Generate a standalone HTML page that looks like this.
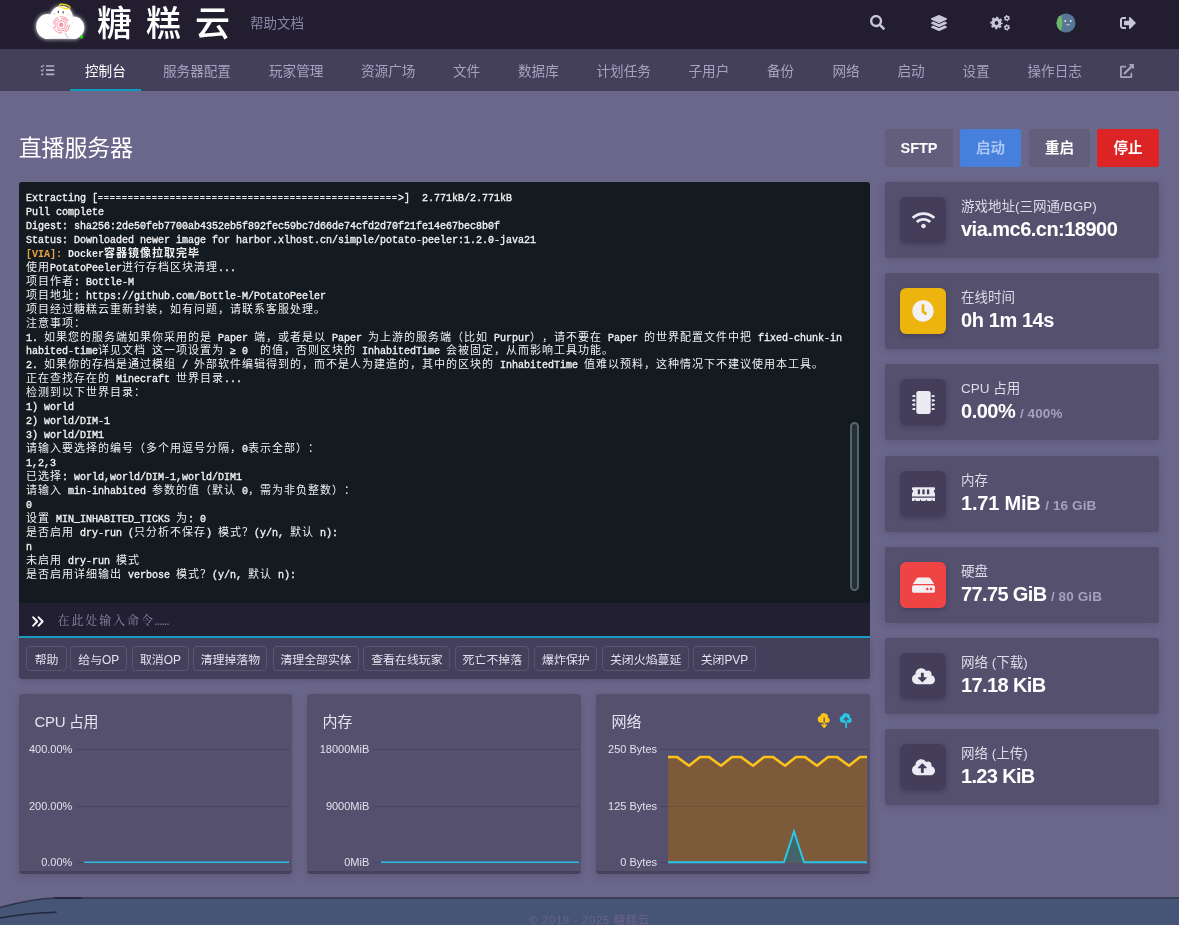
<!DOCTYPE html>
<html lang="zh-CN">
<head>
<meta charset="utf-8">
<title>直播服务器 - 糖糕云</title>
<style>
*{box-sizing:border-box;margin:0;padding:0}
html,body{width:1179px;height:925px;overflow:hidden}
body{will-change:transform;background:#6b678b;font-family:"Liberation Sans","Noto Sans CJK SC",sans-serif;color:#fff;position:relative}
svg{display:block}
.topbar{position:absolute;left:0;top:0;width:1179px;height:49px;background:#221e30}
.logo-text{position:absolute;left:97px;top:-3px;font-size:35px;line-height:48px;letter-spacing:14px;color:#fff;font-family:"Noto Sans CJK SC",sans-serif;font-weight:500;white-space:nowrap}
.help{position:absolute;left:250px;top:14.500px;font-size:13.5px;line-height:18px;color:#8985a6}
.ticon{position:absolute;top:13px}
.nav{position:absolute;left:0;top:49px;width:1179px;height:42px;background:#443f5b}
.nav a{position:absolute;top:0;height:42px;line-height:46px;font-size:13.6px;color:#a7a3bf;white-space:nowrap;text-decoration:none}
.nav a.act{color:#fff}
.nav .ul{position:absolute;left:70px;top:40px;width:71px;height:2px;background:#0f9abf}
h1{position:absolute;left:18.800px;top:129.800px;font-size:23px;line-height:36px;font-weight:400;color:#fff;letter-spacing:-0.2px}
.btn{position:absolute;top:129px;height:38px;border-radius:3px;font-size:14.5px;font-weight:700;line-height:39px;text-align:center;color:#fff;background:#645e7d}
.card{position:absolute;background:#55506e;border-radius:3px;box-shadow:0 2px 10px rgba(40,34,66,.22)}
.term{position:absolute;left:19px;top:182px;width:851px;height:421px;background:#131a20;border-radius:3px 3px 0 0;overflow:hidden}
.lines{position:absolute;left:7px;top:10px;-webkit-text-stroke:.35px #f0f0f0;font-family:"Liberation Mono","Noto Sans CJK SC",monospace;font-size:10px;line-height:13.960px;color:#f0f0f0}
.l{height:13.960px;white-space:pre}
.l i{-webkit-text-stroke:0;line-height:0;text-spacing-trim:space-all;font-kerning:none;font-style:normal;font-size:11px;letter-spacing:1px;font-family:"Noto Sans CJK SC",sans-serif}
.l u{text-decoration:none;font-size:8px;letter-spacing:1.200px;position:relative;top:-.6px;line-height:0}
.l.b{font-weight:700;-webkit-text-stroke:0}
.via{color:#e9a53f}
.sb{position:absolute;left:831px;top:240px;width:9px;height:169px;border:2.200px solid #55656e;border-radius:4.500px;background:#243038}
.cmd{position:absolute;left:19px;top:603px;width:851px;height:35px;background:#231f33;border-bottom:2px solid #17a2c9}
.cmd span{position:absolute;left:38.500px;top:8.300px;font-family:"Noto Serif CJK SC",serif;font-size:12px;line-height:18px;color:#8b87a6;letter-spacing:1.9px;white-space:nowrap}
.cmd span b{font-family:"Liberation Mono",monospace;font-weight:400;letter-spacing:0}
.quick{position:absolute;left:19px;top:638px;width:851px;height:41px;background:#443f5b;border-radius:0 0 3px 3px;box-shadow:0 2px 6px rgba(40,34,66,.25)}
.q{position:absolute;top:8px;height:25px;border:1px solid #5a5574;border-radius:4px;font-size:11.900px;line-height:26.500px;color:#e4e2ee;text-align:center;white-space:nowrap}
.stat{left:885px;width:274px;height:76px}
.ibox{position:absolute;left:15px;top:15px;width:46px;height:46px;border-radius:6px;background:#443e5b;box-shadow:0 2px 5px rgba(30,25,50,.3)}
.ibox svg{position:absolute}
.slab{position:absolute;left:76px;top:14.500px;font-size:13.5px;line-height:20px;color:#dddbe8;white-space:nowrap}
.sval{position:absolute;left:76px;top:34px;font-size:20px;line-height:26px;font-weight:700;color:#fff;white-space:nowrap}
.sval small{font-size:13.5px;color:#a5a1bd;font-weight:700;letter-spacing:.1px;margin-left:-.5px}
.chart{top:694px;width:274px;height:180px;border-bottom:3px solid #47425e;overflow:hidden}
.chart h3{position:absolute;left:15.500px;top:17px;font-size:15px;line-height:22px;font-weight:400;color:#e6e4ef}
.chart svg{position:absolute;left:0;top:0}
.foot{position:absolute;left:0;top:890px;width:1179px;height:35px}
.foot span{position:absolute;left:0;width:1179px;top:23px;text-align:center;font-size:11.500px;line-height:14px;color:#6a638a;letter-spacing:.6px}
</style>
</head>
<body>
<div class="topbar">
  <svg class="logo" style="position:absolute;left:30px;top:0" width="64" height="48" viewBox="30 0 64 48">
    <defs><filter id="gl" x="-20%" y="-20%" width="140%" height="140%"><feGaussianBlur stdDeviation="2"/></filter></defs>
    <g fill="#fff" filter="url(#gl)" opacity=".9"><circle cx="61.500" cy="17.300" r="11.300"/><ellipse cx="47.300" cy="26.400" rx="11.100" ry="12.400"/><ellipse cx="73.500" cy="27.600" rx="10.800" ry="11.200"/><rect x="45" y="20" width="32" height="18.800"/></g>
    <g fill="#fff"><circle cx="61.500" cy="17.300" r="11.300"/><ellipse cx="47.300" cy="26.400" rx="11.100" ry="12.400"/><ellipse cx="73.500" cy="27.600" rx="10.800" ry="11.200"/><rect x="45" y="20" width="32" height="18.800"/></g>
    <ellipse cx="64.700" cy="6.500" rx="5.400" ry="1.900" fill="none" stroke="#f4e20a" stroke-width="1.100" transform="rotate(14 64.700 6.500)"/>
    <path d="M58.300 10.800v2.300M63.200 11.200v2.300" stroke="#444" stroke-width="1.100"/>
    <ellipse cx="54.500" cy="14" rx="1.700" ry=".9" fill="#fde3e6"/><ellipse cx="68" cy="14.600" rx="1.700" ry=".9" fill="#fde3e6"/>
    <g fill="none" stroke="#f9a3b4">
      <circle cx="61.200" cy="24.800" r="8.100" stroke-width="1.100" stroke-dasharray="9 2.500 12 3 8 2 10 4.400"/>
      <circle cx="61.200" cy="24.800" r="6.200" stroke-width="1.100" stroke-dasharray="14 2 10 2.500 8 2.460"/>
      <circle cx="61.200" cy="24.800" r="4.200" stroke-width="1.200"/>
    </g>
    <circle cx="61.200" cy="24.800" r="2.200" fill="#f892a8"/>
    <path d="M65.300 33.300L67.800 37.600" stroke="#d9d9dc" stroke-width="1.300" stroke-linecap="round"/>
    <path d="M46.800 23L51.700 27M73.400 22.300L70 25.500" stroke="#e4e4e6" stroke-width=".7"/>
    <circle cx="81.600" cy="36.900" r="1.600" fill="#22e000"/>
  </svg>
  <div class="logo-text">糖糕云</div>
  <div class="help">帮助文档</div>
  <!-- search -->
  <svg class="ticon" style="left:870px;top:15px" width="15" height="15" viewBox="0 0 512 512"><path fill="#c9c6da" d="M505 442.700L405.300 343c-4.500-4.500-10.600-7-17-7H372c27.600-35.300 44-79.700 44-128C416 93.100 322.900 0 208 0S0 93.100 0 208s93.100 208 208 208c48.300 0 92.700-16.400 128-44v16.300c0 6.400 2.500 12.500 7 17l99.700 99.700c9.400 9.400 24.600 9.400 33.900 0l28.300-28.300c9.400-9.400 9.400-24.600.1-34zM208 336c-70.700 0-128-57.200-128-128 0-70.700 57.200-128 128-128 70.700 0 128 57.200 128 128 0 70.700-57.200 128-128 128z"/></svg>
  <!-- layers -->
  <svg class="ticon" style="left:930.500px;top:15px" width="16" height="16" viewBox="0 0 512 512"><path fill="#c9c6da" d="M12.410 148.020l232.940 105.670c6.800 3.090 14.490 3.090 21.290 0l232.940-105.670c16.550-7.510 16.550-32.520 0-40.030L266.650 2.310a25.607 25.607 0 0 0-21.290 0L12.410 107.980c-16.550 7.510-16.550 32.530 0 40.040zm487.180 88.280l-58.090-26.330-161.640 73.270c-7.560 3.430-15.590 5.170-23.860 5.170s-16.290-1.740-23.860-5.170L70.510 209.970l-58.100 26.330c-16.550 7.500-16.550 32.500 0 40l232.940 105.590c6.800 3.080 14.490 3.080 21.290 0L499.590 276.300c16.550-7.500 16.550-32.500 0-40zm0 127.800l-57.870-26.230-161.860 73.370c-7.560 3.430-15.590 5.170-23.860 5.170s-16.290-1.740-23.860-5.170L70.290 337.870 12.410 364.100c-16.550 7.500-16.550 32.500 0 40l232.940 105.590c6.800 3.080 14.490 3.080 21.290 0L499.590 404.100c16.550-7.500 16.550-32.500 0-40z"/></svg>
  <!-- cogs -->
  <svg class="ticon" style="left:990px;top:14px" width="21" height="18" viewBox="990 14 21 18">
    <g fill="none" stroke="#c9c6da">
      <circle cx="996.500" cy="23" r="3.400" stroke-width="3"/>
      <circle cx="996.500" cy="23" r="5.400" stroke-width="1.700" stroke-dasharray="2.300 1.940" stroke-dashoffset="1.100"/>
      <circle cx="1006.900" cy="18.200" r="1.700" stroke-width="1.400"/>
      <circle cx="1006.900" cy="18.200" r="2.600" stroke-width="1.100" stroke-dasharray="1.350 1.370"/>
      <circle cx="1006.900" cy="27.500" r="1.700" stroke-width="1.400"/>
      <circle cx="1006.900" cy="27.500" r="2.600" stroke-width="1.100" stroke-dasharray="1.350 1.370"/>
    </g>
  </svg>
  <!-- avatar -->
  <svg class="ticon" style="left:1056px;top:13px" width="20" height="20" viewBox="0 0 20 20">
    <defs><clipPath id="av"><circle cx="10" cy="10" r="9.500"/></clipPath></defs>
    <g clip-path="url(#av)"><rect width="20" height="20" fill="#587796"/><ellipse cx="-2" cy="10" rx="8.500" ry="13" fill="#6cb56a"/>
    <circle cx="9.300" cy="8" r=".9" fill="#e4ecf2"/><circle cx="14.800" cy="8" r=".9" fill="#e4ecf2"/><path d="M10.500 11.500q1.500 1.400 3 0" stroke="#e4ecf2" stroke-width=".9" fill="none"/></g>
  </svg>
  <!-- sign out -->
  <svg class="ticon" style="left:1120px;top:15px" width="16" height="16" viewBox="0 0 512 512"><path fill="#c9c6da" d="M497 273L329 441c-15 15-41 4.500-41-17v-96H152c-13.300 0-24-10.700-24-24v-96c0-13.300 10.700-24 24-24h136V88c0-21.400 25.900-32 41-17l168 168c9.300 9.400 9.300 24.600 0 34zM192 436v-40c0-6.600-5.400-12-12-12H96c-17.700 0-32-14.300-32-32V160c0-17.700 14.300-32 32-32h84c6.600 0 12-5.400 12-12V76c0-6.600-5.400-12-12-12H96c-53 0-96 43-96 96v192c0 53 43 96 96 96h84c6.600 0 12-5.400 12-12z"/></svg>
</div>
<div class="nav">
  <svg style="position:absolute;left:40px;top:15px" width="15" height="12" viewBox="0 0 15 12"><g fill="none" stroke="#b3afc9" stroke-width="1.700"><path d="M6 2H14.300M6 6.200H14.300M6 10.400H14.300"/><path d="M1 2l1 1 1.900-2.200M1 6.200l1 1 1.900-2.200" stroke-width="1.100"/></g><circle cx="2.300" cy="10.400" r="1.100" fill="#b3afc9"/></svg>
  <a class="act" style="left:85px">控制台</a>
  <a style="left:163px">服务器配置</a>
  <a style="left:269px">玩家管理</a>
  <a style="left:361px">资源广场</a>
  <a style="left:453px">文件</a>
  <a style="left:518px">数据库</a>
  <a style="left:596.500px">计划任务</a>
  <a style="left:688.500px">子用户</a>
  <a style="left:767px">备份</a>
  <a style="left:832.500px">网络</a>
  <a style="left:897.500px">启动</a>
  <a style="left:962.500px">设置</a>
  <a style="left:1027.500px">操作日志</a>
  <svg style="position:absolute;left:1119.500px;top:14.700px" width="14" height="14" viewBox="0 0 512 512"><path fill="#a7a3bf" d="M432,320H400a16,16,0,0,0-16,16V448H64V128H208a16,16,0,0,0,16-16V80a16,16,0,0,0-16-16H48A48,48,0,0,0,0,112V464a48,48,0,0,0,48,48H400a48,48,0,0,0,48-48V336A16,16,0,0,0,432,320ZM488,0h-128c-21.370,0-32.050,25.910-17,41l35.730,35.730L135,320.370a24,24,0,0,0,0,34L157.670,377a24,24,0,0,0,34,0L435.280,133.320,471,169c15,15,41,4.500,41-17V24A24,24,0,0,0,488,0Z"/></svg>
  <div class="ul"></div>
</div>
<h1>直播服务器</h1>
<div class="btn" style="left:885px;width:68px">SFTP</div>
<div class="btn" style="left:960px;width:61px;background:#467fdc;color:#abc7f3">启动</div>
<div class="btn" style="left:1029px;width:61px">重启</div>
<div class="btn" style="left:1097px;width:62px;background:#dc2424">停止</div>
<div class="term">
<div class="lines">
<div class="l">Extracting [<u>==================================================</u>&gt;]  2.771kB/2.771kB</div>
<div class="l">Pull complete</div>
<div class="l">Digest: sha256:2de50feb7700ab4352eb5f892fec59bc7d66de74cfd2d70f21fe14e67bec8b0f</div>
<div class="l">Status: Downloaded newer image for harbor.xlhost.cn/simple/potato-peeler:1.2.0-java21</div>
<div class="l b"><span class="via">[VIA]:</span> Docker<i>容器镜像拉取完毕</i></div>
<div class="l"><i>使用</i>PotatoPeeler<i>进行存档区块清理</i>...</div>
<div class="l"><i>项目作者</i>: Bottle-M</div>
<div class="l"><i>项目地址</i>: https://github.com/Bottle-M/PotatoPeeler</div>
<div class="l"><i>项目经过糖糕云重新封装，如有问题，请联系客服处理。</i></div>
<div class="l"><i>注意事项：</i></div>
<div class="l">1. <i>如果您的服务端如果你采用的是</i> Paper <i>端，或者是以</i> Paper <i>为上游的服务端（比如</i> Purpur<i>），请不要在</i> Paper <i>的世界配置文件中把</i> fixed-chunk-in</div>
<div class="l">habited-time<i>详见文档</i> <i>这一项设置为</i> ≥ 0  <i>的值，否则区块的</i> InhabitedTime <i>会被固定，从而影响工具功能。</i></div>
<div class="l">2. <i>如果你的存档是通过模组</i> / <i>外部软件编辑得到的，而不是人为建造的，其中的区块的</i> InhabitedTime <i>值难以预料，这种情况下不建议使用本工具。</i></div>
<div class="l"><i>正在查找存在的</i> Minecraft <i>世界目录</i>...</div>
<div class="l"><i>检测到以下世界目录：</i></div>
<div class="l">1) world</div>
<div class="l">2) world/DIM-1</div>
<div class="l">3) world/DIM1</div>
<div class="l"><i>请输入要选择的编号（多个用逗号分隔，</i>0<i>表示全部）：</i></div>
<div class="l">1,2,3</div>
<div class="l"><i>已选择</i>: world,world/DIM-1,world/DIM1</div>
<div class="l"><i>请输入</i> min-inhabited <i>参数的值（默认</i> 0<i>，需为非负整数）：</i></div>
<div class="l">0</div>
<div class="l"><i>设置</i> MIN_INHABITED_TICKS <i>为</i>: 0</div>
<div class="l"><i>是否启用</i> dry-run (<i>只分析不保存</i>) <i>模式？</i>(y/n, <i>默认</i> n):</div>
<div class="l">n</div>
<div class="l"><i>未启用</i> dry-run <i>模式</i></div>
<div class="l"><i>是否启用详细输出</i> verbose <i>模式？</i>(y/n, <i>默认</i> n):</div>
</div>
<div class="sb"></div>
</div>
<div class="cmd">
  <svg style="position:absolute;left:13px;top:12.500px" width="12" height="11" viewBox="0 0 12 11"><path d="M1.200 1.300L5.200 5.500 1.200 9.700M6.600 1.300L10.600 5.500 6.600 9.700" fill="none" stroke="#fff" stroke-width="1.900" stroke-linecap="round" stroke-linejoin="round"/></svg>
  <span>在此处输入命令<b>……</b></span>
</div>
<div class="quick">
  <div class="q" style="left:7.3px;width:40.6px">帮助</div>
  <div class="q" style="left:51.2px;width:57.2px">给与OP</div>
  <div class="q" style="left:113.3px;width:56.3px">取消OP</div>
  <div class="q" style="left:174.4px;width:74px">清理掉落物</div>
  <div class="q" style="left:253.8px;width:86.6px">清理全部实体</div>
  <div class="q" style="left:344.4px;width:87px">查看在线玩家</div>
  <div class="q" style="left:436.2px;width:74.3px">死亡不掉落</div>
  <div class="q" style="left:515.4px;width:63px">爆炸保护</div>
  <div class="q" style="left:583.4px;width:86.5px">关闭火焰蔓延</div>
  <div class="q" style="left:674.2px;width:62.5px">关闭PVP</div>
</div>
<div class="card stat" style="top:182px">
  <div class="ibox"><svg style="left:11.500px;top:13.800px" width="23" height="18.400" viewBox="0 0 640 512"><path fill="#eceaf3" d="M634.910 154.880C457.740-8.990 182.190-8.930 5.090 154.880c-6.660 6.160-6.790 16.590-.35 22.980l34.240 33.970c6.140 6.100 16.020 6.230 22.400.38 145.920-133.680 371.300-133.710 517.250 0 6.380 5.850 16.260 5.710 22.400-.38l34.240-33.970c6.430-6.390 6.300-16.820-.36-22.980zM320 352c-35.350 0-64 28.650-64 64s28.650 64 64 64 64-28.650 64-64-28.650-64-64-64zm202.670-83.590c-115.260-101.930-290.210-101.820-405.340 0-6.900 6.100-7.120 16.690-.57 23.150l34.440 33.990c6 5.920 15.660 6.320 22.050.8 83.950-72.570 209.740-72.410 293.490 0 6.390 5.520 16.050 5.130 22.050-.8l34.440-33.990c6.560-6.460 6.330-17.060-.56-23.150z"/></svg></div>
  <div class="slab">游戏地址(三网通/BGP)</div>
  <div class="sval" style="letter-spacing:-.52px">via.mc6.cn:18900</div>
</div>
<div class="card stat" style="top:273px">
  <div class="ibox" style="background:#ecb40c"><svg style="left:12px;top:12px" width="22" height="22" viewBox="0 0 512 512"><path fill="#f4f1f6" d="M256,8C119,8,8,119,8,256S119,504,256,504,504,393,504,256,393,8,256,8Zm92.490,313h0l-20,25a16,16,0,0,1-22.490,2.500h0l-67-49.720a40,40,0,0,1-15-31.230V112a16,16,0,0,1,16-16h32a16,16,0,0,1,16,16V256l58,42.500A16,16,0,0,1,348.490,321Z"/></svg></div>
  <div class="slab">在线时间</div>
  <div class="sval" style="letter-spacing:-.41px">0h 1m 14s</div>
</div>
<div class="card stat" style="top:364px">
  <div class="ibox"><svg style="left:11.500px;top:11.500px" width="23" height="23" viewBox="0 0 512 512"><path fill="#eceaf3" d="M416 48v416c0 26.510-21.490 48-48 48H144c-26.510 0-48-21.490-48-48V48c0-26.510 21.490-48 48-48h224c26.510 0 48 21.490 48 48zm96 58v12a6 6 0 0 1-6 6h-18v6a6 6 0 0 1-6 6h-42V88h42a6 6 0 0 1 6 6v6h18a6 6 0 0 1 6 6zm0 96v12a6 6 0 0 1-6 6h-18v6a6 6 0 0 1-6 6h-42v-48h42a6 6 0 0 1 6 6v6h18a6 6 0 0 1 6 6zm0 96v12a6 6 0 0 1-6 6h-18v6a6 6 0 0 1-6 6h-42v-48h42a6 6 0 0 1 6 6v6h18a6 6 0 0 1 6 6zm0 96v12a6 6 0 0 1-6 6h-18v6a6 6 0 0 1-6 6h-42v-48h42a6 6 0 0 1 6 6v6h18a6 6 0 0 1 6 6zM30 376h42v48H30a6 6 0 0 1-6-6v-6H6a6 6 0 0 1-6-6v-12a6 6 0 0 1 6-6h18v-6a6 6 0 0 1 6-6zm0-96h42v48H30a6 6 0 0 1-6-6v-6H6a6 6 0 0 1-6-6v-12a6 6 0 0 1 6-6h18v-6a6 6 0 0 1 6-6zm0-96h42v48H30a6 6 0 0 1-6-6v-6H6a6 6 0 0 1-6-6v-12a6 6 0 0 1 6-6h18v-6a6 6 0 0 1 6-6zm0-96h42v48H30a6 6 0 0 1-6-6v-6H6a6 6 0 0 1-6-6v-12a6 6 0 0 1 6-6h18v-6a6 6 0 0 1 6-6z"/></svg></div>
  <div class="slab">CPU 占用</div>
  <div class="sval" style="letter-spacing:-.48px">0.00% <small>/ 400%</small></div>
</div>
<div class="card stat" style="top:456px">
  <div class="ibox"><svg style="left:11.500px;top:13.800px" width="23" height="18.400" viewBox="0 0 640 512"><path fill="#eceaf3" d="M640 130.940V96c0-17.670-14.330-32-32-32H32C14.330 64 0 78.330 0 96v34.940c18.600 6.610 32 24.190 32 45.060s-13.400 38.450-32 45.060V320h640v-98.940c-18.600-6.610-32-24.190-32-45.060s13.400-38.450 32-45.060zM224 256h-64V128h64v128zm128 0h-64V128h64v128zm128 0h-64V128h64v128zM0 448h64v-26.670c0-8.840 7.160-16 16-16s16 7.160 16 16V448h128v-26.670c0-8.840 7.160-16 16-16s16 7.160 16 16V448h128v-26.670c0-8.840 7.160-16 16-16s16 7.160 16 16V448h128v-26.670c0-8.840 7.160-16 16-16s16 7.160 16 16V448h64v-96H0v96z"/></svg></div>
  <div class="slab">内存</div>
  <div class="sval" style="letter-spacing:-.21px">1.71 MiB <small>/ 16 GiB</small></div>
</div>
<div class="card stat" style="top:547px">
  <div class="ibox" style="background:#ef4444"><svg style="left:11.500px;top:12.600px" width="23" height="20.400" viewBox="0 0 576 512"><path fill="#f6eef0" d="M576 304v96c0 26.510-21.490 48-48 48H48c-26.510 0-48-21.490-48-48v-96c0-26.510 21.490-48 48-48h480c26.510 0 48 21.490 48 48zm-48-80a79.557 79.557 0 0 1 30.777 6.165L462.250 85.374A48.003 48.003 0 0 0 422.311 64H153.689a48 48 0 0 0-39.938 21.374L17.223 230.165A79.557 79.557 0 0 1 48 224h480zm-48 96c-17.673 0-32 14.327-32 32s14.327 32 32 32 32-14.327 32-32-14.327-32-32-32zm-96 0c-17.673 0-32 14.327-32 32s14.327 32 32 32 32-14.327 32-32-14.327-32-32-32z"/></svg></div>
  <div class="slab">硬盘</div>
  <div class="sval" style="letter-spacing:-.63px">77.75 GiB <small>/ 80 GiB</small></div>
</div>
<div class="card stat" style="top:638px">
  <div class="ibox"><svg style="left:11.500px;top:13.800px" width="23" height="18.400" viewBox="0 0 640 512"><path fill="#eceaf3" d="M537.600 226.600c4.100-10.700 6.400-22.400 6.400-34.600 0-53-43-96-96-96-19.700 0-38.100 6-53.300 16.200C367 64.200 315.300 32 256 32c-88.400 0-160 71.600-160 160 0 2.700.1 5.400.2 8.100C40.200 219.800 0 273.200 0 336c0 79.500 64.500 144 144 144h368c70.700 0 128-57.300 128-128 0-61.900-44-113.600-102.400-125.400zm-132.900 88.700L299.300 420.700c-6.200 6.200-16.400 6.200-22.600 0L171.300 315.300c-10.100-10.100-2.900-27.300 11.300-27.300H248V176c0-8.800 7.200-16 16-16h48c8.800 0 16 7.200 16 16v112h65.400c14.200 0 21.400 17.200 11.300 27.300z"/></svg></div>
  <div class="slab">网络 (下载)</div>
  <div class="sval" style="letter-spacing:-.61px">17.18 KiB</div>
</div>
<div class="card stat" style="top:729px">
  <div class="ibox"><svg style="left:11.500px;top:13.800px" width="23" height="18.400" viewBox="0 0 640 512"><path fill="#eceaf3" d="M537.600 226.600c4.100-10.700 6.400-22.400 6.400-34.600 0-53-43-96-96-96-19.700 0-38.100 6-53.300 16.200C367 64.200 315.300 32 256 32c-88.400 0-160 71.600-160 160 0 2.700.1 5.400.2 8.100C40.200 219.800 0 273.200 0 336c0 79.500 64.500 144 144 144h368c70.700 0 128-57.300 128-128 0-61.900-44-113.600-102.400-125.400zM393.400 288H328v112c0 8.800-7.200 16-16 16h-48c-8.800 0-16-7.200-16-16V288h-65.400c-14.300 0-21.400-17.200-11.300-27.300l105.400-105.400c6.200-6.200 16.400-6.200 22.600 0l105.400 105.400c10.100 10.100 2.900 27.300-11.300 27.300z"/></svg></div>
  <div class="slab">网络 (上传)</div>
  <div class="sval" style="letter-spacing:-.66px">1.23 KiB</div>
</div>
<div class="card chart" style="left:19px;width:273px">
  <h3 style="letter-spacing:-.35px">CPU 占用</h3>
  <svg width="273" height="177" viewBox="0 0 273 177" font-family="Liberation Sans, sans-serif" font-size="11" fill="#e3e1ec">
    <g stroke="#484360" stroke-width="1"><path d="M57 55.500H270M57 112.500H270M57 168.500H65"/></g>
    <text x="53.400" y="58.800" text-anchor="end">400.00%</text>
    <text x="53.400" y="115.800" text-anchor="end">200.00%</text>
    <text x="53.400" y="171.800" text-anchor="end">0.00%</text>
    <path d="M65 168.300H270" stroke="#26bfe3" stroke-width="1.600" fill="none"/>
  </svg>
</div>
<div class="card chart" style="left:307px">
  <h3>内存</h3>
  <svg width="274" height="177" viewBox="0 0 274 177" font-family="Liberation Sans, sans-serif" font-size="11" fill="#e3e1ec">
    <g stroke="#484360" stroke-width="1"><path d="M66 55.500H272M66 112.500H272M66 168.500H74"/></g>
    <text x="62.300" y="58.800" text-anchor="end">18000MiB</text>
    <text x="62.300" y="115.800" text-anchor="end">9000MiB</text>
    <text x="62.300" y="171.800" text-anchor="end">0MiB</text>
    <path d="M74 168.300H272" stroke="#26bfe3" stroke-width="1.600" fill="none"/>
  </svg>
</div>
<div class="card chart" style="left:596px">
  <h3>网络</h3>
  <svg width="274" height="177" viewBox="0 0 274 177" font-family="Liberation Sans, sans-serif" font-size="11" fill="#e3e1ec">
    <g stroke="#484360" stroke-width="1"><path d="M64 55.500H272M64 112.500H72M64 168.500H72"/></g>
    <path d="M72 63H81L93 71.700 104 63H113L125 71.700 136 63H145L157 71.700 168 63H177L189 71.700 200 63H209L221 71.700 232 63H241L253 71.700 264 63H271V168.500H72Z" fill="#7d5a3a"/>
    <path d="M72 112.500H271" stroke="#6f5138" stroke-width="1"/>
    <path d="M188 168.300L198 137.500 208 168.300Z" fill="#45646a"/>
    <path d="M72 63H81L93 71.700 104 63H113L125 71.700 136 63H145L157 71.700 168 63H177L189 71.700 200 63H209L221 71.700 232 63H241L253 71.700 264 63H271" stroke="#fcc419" stroke-width="2.600" fill="none" stroke-linejoin="round"/>
    <path d="M72 168.300H188L198 137.500 208 168.300H271" stroke="#26c8e6" stroke-width="2" fill="none" stroke-linejoin="miter"/>
    <text x="61" y="58.800" text-anchor="end">250 Bytes</text>
    <text x="61" y="115.800" text-anchor="end">125 Bytes</text>
    <text x="61" y="171.800" text-anchor="end">0 Bytes</text>
    <g transform="translate(221.800,18) scale(1.060,1.120)"><path d="M9.600 5.200A3 3 0 0 0 7 1.300 3.800 3.800 0 0 0 2.200 3.600 3 3 0 0 0 3 9.500H10A2.300 2.300 0 0 0 9.600 5.200Z" fill="#fcc419"/><path d="M6 5V13M3.600 11L6 13.600 8.400 11" stroke="#fcc419" stroke-width="1.400" fill="none"/><path d="M6 4.800V9.300" stroke="#55506e" stroke-width="1.100"/></g>
    <g transform="translate(243.800,18) scale(1.060,1.120)"><path d="M9.600 5.200A3 3 0 0 0 7 1.300 3.800 3.800 0 0 0 2.200 3.600 3 3 0 0 0 3 9.500H10A2.300 2.300 0 0 0 9.600 5.200Z" fill="#26c8e6"/><path d="M6 6V14" stroke="#26c8e6" stroke-width="1.300" fill="none"/><path d="M6 5.500V9.500M3.800 7.200L6 4.800 8.200 7.200" stroke="#55506e" stroke-width="1.100" fill="none"/><path d="M6 9V14" stroke="#26c8e6" stroke-width="1.300" fill="none"/></g>
  </svg>
</div>
<div class="foot">
  <svg width="1179" height="35" viewBox="0 0 1179 35" style="position:absolute;left:0;top:0">
    <path d="M0 17.500C18 12.500 36 8.500 56 8H1179V35H0Z" fill="#465475"/>
    <path d="M0 17.500C18 12.500 36 8.500 56 8H1179" fill="none" stroke="#2f354c" stroke-width="1.500"/>
    <path d="M55 7.800H81" stroke="#23273a" stroke-width="1.800" stroke-linecap="round"/>
    <path d="M0 28C18 24.500 36 23 56 22.300" fill="none" stroke="#22283c" stroke-width="1.500" stroke-linecap="round"/>
  </svg>
  <span>© 2019 - 2025 糖糕云</span>
</div>
</body>
</html>
